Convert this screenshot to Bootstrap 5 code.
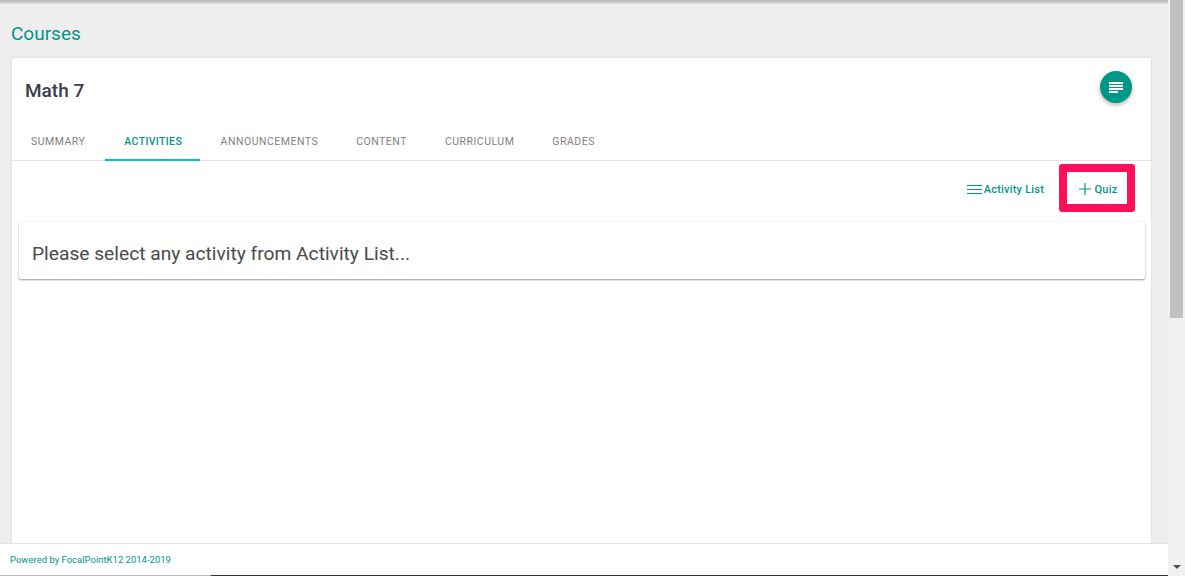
<!DOCTYPE html>
<html lang="en">
<head>
<meta charset="utf-8">
<title>Courses</title>
<link href="https://cdn.jsdelivr.net/npm/bootstrap@5.3.0/dist/css/bootstrap.min.css" rel="stylesheet">
<style>
html,body{height:576px;overflow:hidden}
body{font-family:Roboto,"Liberation Sans",sans-serif;background:#eee}
.app-shell{height:576px}
.main-col{width:1168px;min-width:1168px;height:576px;position:relative}
.top-shade{height:4px;background:linear-gradient(#b8b8b8,#c4c4c4 50%,#e4e4e4)}
.content-area{flex:1 1 auto;min-height:0;overflow:hidden;padding:0 17px 0 12px}
.page-title{font-size:19px;line-height:24px;color:#009688;font-weight:400;margin:18px 0 12px -1px}
.course-card{background:#fff;height:600px;border-radius:2px;box-shadow:0 0 3px rgba(0,0,0,.12)}
.course-head{height:64px;padding:2px 19px 0 13px}
.course-name{font-size:19px;font-weight:500;color:#3b3b4b;margin:0}
.fab-round{width:32px;height:32px;border-radius:50%;background:#009688;border:0;padding:0;margin-bottom:8px;box-shadow:0 2px 4px rgba(0,0,0,.3)}
.tab-row{height:39px;border-bottom:1px solid #e3e3e3}
.tab-row .nav-link{font-size:10.5px;letter-spacing:.5px;line-height:40px;height:39px;padding:0 19px;color:#7f7f7f;text-transform:uppercase;border-radius:0;font-weight:400}
.tab-row .nav-link.is-current{color:#009688;font-weight:500;letter-spacing:.35px;margin:0 1.500px 0 1px;padding-right:18px;border-bottom:2px solid #00bcd4}
.tool-row{height:51px;padding-right:16px;padding-top:3px}
.tool-btn{font-size:11px;letter-spacing:.2px;font-weight:500;color:#009688;background:none;border:0;padding:2px 0 0;line-height:1}
.list-icon{margin-right:1px}
.quiz-mark{width:76px;height:48px;border:8px solid #ff0f5a;border-radius:3px;margin-left:15px;padding-left:2px}
.notice-box{margin:10px 6px 0 7px;height:57px;padding:8px 13px 0;background:#fff;border-radius:2px;box-shadow:0 1px 2px rgba(0,0,0,.4),0 0 2px rgba(0,0,0,.08);font-size:19.2px;color:#4a4a4a}
.foot-bar{height:33px;background:#fff;border-top:1px solid #e4e4e4;padding-left:10px;font-size:9.5px;color:#009688;position:relative}
.foot-line{position:absolute;left:0;right:0;bottom:0;height:1px;background:#bbb}
.foot-line-dark{position:absolute;left:211px;right:0;bottom:0;height:1px;background:#333}
.scroll-col{width:17px;height:576px;background:#f1f1f1;position:relative}
.scroll-thumb{width:13px;height:318px;margin:0 auto;background:#c1c1c1}
.scroll-arrow{position:absolute;left:5px;bottom:7px;width:0;height:0;border-left:4px solid transparent;border-right:4px solid transparent;border-top:4px solid #505050}
</style>
</head>
<body>
<div class="app-shell d-flex">
  <div class="main-col d-flex flex-column">
    <div class="top-shade flex-shrink-0"></div>
    <div class="content-area">
      <h1 class="page-title">Courses</h1>
      <div class="course-card">
        <div class="course-head d-flex align-items-center justify-content-between">
          <h2 class="course-name">Math 7</h2>
          <button class="fab-round d-flex align-items-center justify-content-center" type="button" aria-label="Details">
            <svg width="14" height="11" viewBox="0 0 14 11"><path fill="#fff" d="M0 0h14v2H0zM0 3h14v2H0zM0 6h14v2H0zM0 9h9v2H0z"/></svg>
          </button>
        </div>
        <ul class="nav tab-row">
          <li class="nav-item"><a class="nav-link" href="#">Summary</a></li>
          <li class="nav-item"><a class="nav-link is-current" href="#">Activities</a></li>
          <li class="nav-item"><a class="nav-link" href="#">Announcements</a></li>
          <li class="nav-item"><a class="nav-link" href="#">Content</a></li>
          <li class="nav-item"><a class="nav-link" href="#">Curriculum</a></li>
          <li class="nav-item"><a class="nav-link" href="#">Grades</a></li>
        </ul>
        <div class="tool-row d-flex align-items-center justify-content-end">
          <button class="tool-btn d-flex align-items-center" type="button">
            <svg class="list-icon" width="17" height="11" viewBox="0 0 17 11"><path fill="none" stroke="#009688" d="M1 1.500h15M1 5.500h15M1 9.500h15"/></svg>
            <span>Activity List</span>
          </button>
          <div class="quiz-mark d-flex align-items-center justify-content-center">
            <button class="tool-btn d-flex align-items-center gap-1" type="button">
              <svg width="12" height="12" viewBox="0 0 12 12"><path fill="none" stroke="#009688" stroke-width="1.200" d="M6 0v12M0 6h12"/></svg>
              <span>Quiz</span>
            </button>
          </div>
        </div>
        <div class="notice-box d-flex align-items-center">Please select any activity from Activity List...</div>
      </div>
    </div>
    <div class="foot-bar flex-shrink-0 d-flex align-items-center">Powered by FocalPointK12 2014-2019<span class="foot-line"></span><span class="foot-line-dark"></span></div>
  </div>
  <div class="scroll-col">
    <div class="scroll-thumb"></div>
    <span class="scroll-arrow"></span>
  </div>
</div>
<script src="https://cdn.jsdelivr.net/npm/bootstrap@5.3.0/dist/js/bootstrap.bundle.min.js"></script>
</body>
</html>
